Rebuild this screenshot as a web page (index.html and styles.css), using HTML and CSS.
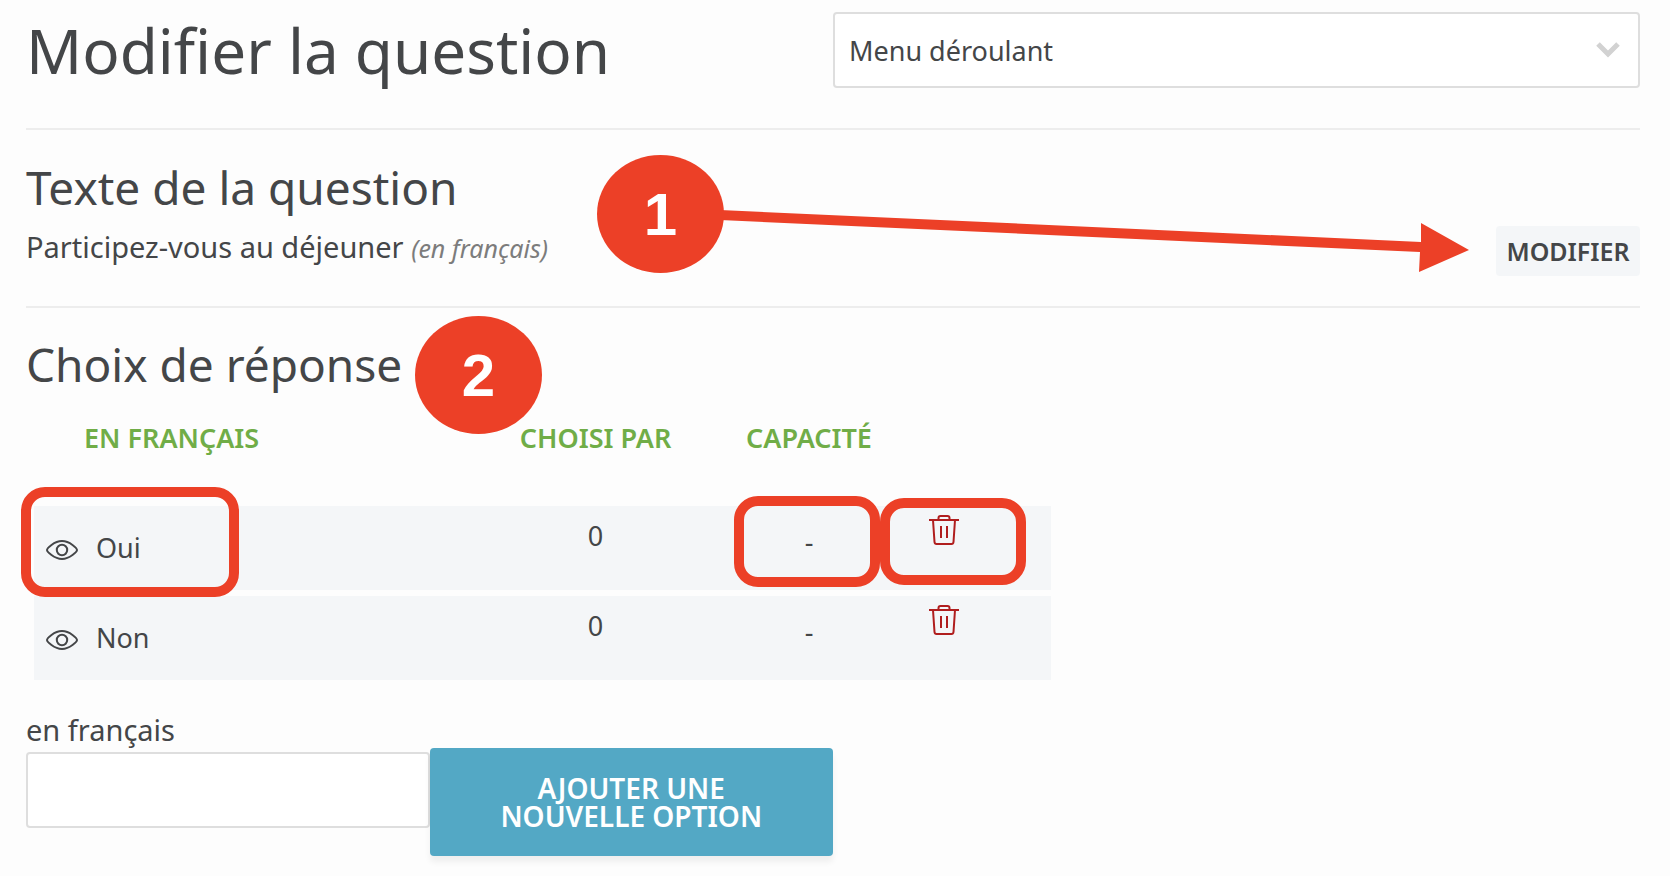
FILE: index.html
```html
<!DOCTYPE html>
<html lang="fr">

<head>
  <meta charset="UTF-8" />
  <meta name="viewport" content="width=device-width, initial-scale=1.0"/>
  <title>Modifier la question</title>
  <link rel="stylesheet" href="styles.css">
</head>

<body>
  <svg class="sprite" aria-hidden="true">
    <symbol id="eye" viewBox="0 0 32 20">
      <path d="M1 10C1 8.500 8 1 16 1S31 8.500 31 10S24 19 16 19S1 11.500 1 10Z" />
      <circle cx="16" cy="10" r="5.200" />
    </symbol>
    <symbol id="trash" viewBox="0 0 30 30">
      <path d="M0 5H30M9.500 5V3Q9.500 1 11.500 1H18.500Q20.500 1 20.500 3V5M4 5L5.500 27Q5.700 29 7.500 29H22.500Q24.300 29 24.500 27L26 5M12 11V23M18 11V23" />
    </symbol>
  </svg>

  <main class="main">
    <header class="header">
      <h1>Modifier la question</h1>
      <div class="select-box">
        <select class="type" aria-label="Type de question">
          <option>Menu déroulant</option>
        </select>
        <svg class="chevron" viewBox="0 0 24 16"><path d="M2 2L12 12L22 2" /></svg>
      </div>
    </header>

    <section class="question">
      <div class="question-text">
        <h2>Texte de la question</h2>
        <p class="text">Participez-vous au déjeuner <em>(en français)</em></p>
      </div>
      <button class="edit" type="button">MODIFIER</button>
      <span class="badge badge-one">1</span>
      <svg class="arrow" viewBox="0 0 749 62" preserveAspectRatio="none">
        <path d="M0 0L701 32V13L749 40L699 62L700 42L0 10Z" />
      </svg>
    </section>

    <section class="choices">
      <h2>Choix de réponse</h2>
      <span class="badge badge-two">2</span>
      <table class="options">
        <colgroup>
          <col class="col-name"><col class="col-count"><col class="col-capacity"><col class="col-delete"><col>
        </colgroup>
        <thead>
          <tr>
            <th class="name-head">EN FRANÇAIS</th>
            <th>CHOISI PAR</th>
            <th>CAPACITÉ</th>
            <th></th>
            <th></th>
          </tr>
        </thead>
        <tbody>
          <tr>
            <td>
              <div class="name"><svg class="eye"><use href="#eye" /></svg>Oui</div>
              <span class="mark mark-name"></span>
            </td>
            <td class="count">0</td>
            <td class="capacity">-<span class="mark mark-capacity"></span></td>
            <td>
              <button class="delete" type="button" aria-label="Supprimer Oui"><svg class="trash"><use href="#trash" /></svg></button>
              <span class="mark mark-delete"></span>
            </td>
            <td></td>
          </tr>
          <tr>
            <td>
              <div class="name"><svg class="eye"><use href="#eye" /></svg>Non</div>
            </td>
            <td class="count">0</td>
            <td class="capacity">-</td>
            <td>
              <button class="delete" type="button" aria-label="Supprimer Non"><svg class="trash"><use href="#trash" /></svg></button>
            </td>
            <td></td>
          </tr>
        </tbody>
      </table>
    </section>

    <form class="add">
      <div class="field">
        <label for="option">en français</label>
        <input id="option" type="text">
      </div>
      <button class="add-btn" type="button">AJOUTER UNE NOUVELLE OPTION</button>
    </form>
  </main>
</body>

</html>
```
FILE: styles.css
```css
* {
  margin: 0;
  padding: 0;
  box-sizing: border-box;
}

:root {
  --text: #444648;
  --line: #ededed;
  --border: #dedede;
  --row: #f4f6f8;
  --green: #70ad47;
  --blue: #53a8c5;
  --red: #ec4027;
}

body {
  font-family: "Noto Sans", "Open Sans", sans-serif;
  font-size: 27px;
  line-height: 40px;
  color: var(--text);
  background-color: #fdfdfd;
}

.sprite {
  display: none;
}

.main {
  padding: 12px 30px 20px 26px;
}

h1 {
  font-size: 62px;
  font-weight: 400;
  line-height: 76px;
}

h2 {
  font-size: 46px;
  font-weight: 400;
  line-height: 64px;
}

button,
input,
select {
  font-family: inherit;
  color: inherit;
}

.header {
  display: flex;
  height: 118px;
  border-bottom: 2px solid var(--line);
}

.header h1,
.select-box {
  width: 50%;
}

.select-box {
  position: relative;
}

.type {
  width: 100%;
  height: 76px;
  padding: 0 14px;
  font-size: 27px;
  border: 2px solid var(--border);
  border-radius: 4px;
  background-color: #fff;
  appearance: none;
}

.chevron {
  position: absolute;
  top: 30px;
  right: 20px;
  width: 24px;
  height: 16px;
  fill: none;
  stroke: #d2d2d2;
  stroke-width: 5;
}

.question {
  position: relative;
  display: flex;
  justify-content: space-between;
  align-items: flex-end;
  height: 178px;
  padding-bottom: 30px;
  border-bottom: 2px solid var(--line);
}

.question-text {
  padding-bottom: 8px;
}

.text {
  margin-top: 8px;
  font-size: 29px;
}

.text em {
  font-size: 25px;
  color: #7c7c7c;
}

.edit {
  width: 144px;
  height: 50px;
  font-size: 25px;
  font-weight: 600;
  border: none;
  border-radius: 4px;
  background-color: var(--row);
}

.badge {
  position: absolute;
  width: 127px;
  height: 118px;
  border-radius: 50%;
  font-family: "Liberation Sans", Arial, sans-serif;
  font-size: 60px;
  font-weight: 700;
  line-height: 120px;
  text-align: center;
  color: #fff;
  background-color: var(--red);
}

.badge-one {
  top: 25px;
  left: 571px;
}

.badge-two {
  top: 8px;
  left: 389px;
}

.arrow {
  position: absolute;
  top: 80px;
  left: 694px;
  width: calc(100% - 865px);
  height: 62px;
  fill: var(--red);
}

.choices {
  position: relative;
  padding-top: 24px;
}

.options {
  width: 63%;
  margin: 2px 0 0 8px;
  table-layout: fixed;
  border-spacing: 0 6px;
}

.col-name {
  width: 461px;
}

.col-count {
  width: 201px;
}

.col-capacity {
  width: 226px;
}

.col-delete {
  width: 44px;
}

th {
  height: 96px;
  padding-top: 14px;
  font-weight: 600;
  vertical-align: top;
  color: var(--green);
}

.name-head {
  padding-left: 50px;
  text-align: left;
}

td {
  position: relative;
  height: 84px;
  vertical-align: top;
  text-align: center;
  background-color: var(--row);
}

.name {
  display: flex;
  align-items: center;
  gap: 18px;
  padding: 22px 0 0 12px;
}

.eye {
  width: 32px;
  height: 20px;
  margin-top: 4px;
  fill: none;
  stroke: var(--text);
  stroke-width: 2;
}

.count {
  padding-top: 10px;
}

.capacity {
  padding-top: 16px;
}

.delete {
  display: block;
  margin: 9px auto 0;
  border: none;
  background: none;
}

.trash {
  display: block;
  width: 30px;
  height: 30px;
  fill: none;
  stroke: #b01e1e;
  stroke-width: 2;
}

/* red frames around the cells */
.mark {
  position: absolute;
  z-index: 1;
  border: 10px solid var(--red);
  border-radius: 24px;
  pointer-events: none;
}

.mark-name {
  top: -19px;
  left: -13px;
  width: 218px;
  height: 110px;
}

.mark-capacity {
  top: -10px;
  left: 38px;
  width: 146px;
  height: 91px;
}

.mark-delete {
  top: -8px;
  left: -42px;
  width: 146px;
  height: 87px;
}

.add {
  display: flex;
  align-items: flex-end;
  padding-top: 24px;
}

.field,
.add-btn {
  width: 25%;
}

.field {
  padding-bottom: 28px;
}

.field label {
  display: block;
  padding-bottom: 2px;
  font-size: 29px;
}

.field input {
  display: block;
  width: 100%;
  height: 76px;
  padding: 0 14px;
  font-size: 27px;
  border: 2px solid var(--border);
  border-radius: 4px;
  background-color: #fff;
}

.add-btn {
  height: 108px;
  padding: 0 60px;
  font-size: 28px;
  font-weight: 600;
  line-height: 28px;
  color: #fff;
  border: none;
  border-radius: 4px;
  background-color: var(--blue);
  box-shadow: 0 6px 6px rgba(0, 0, 0, 0.06);
}
```
